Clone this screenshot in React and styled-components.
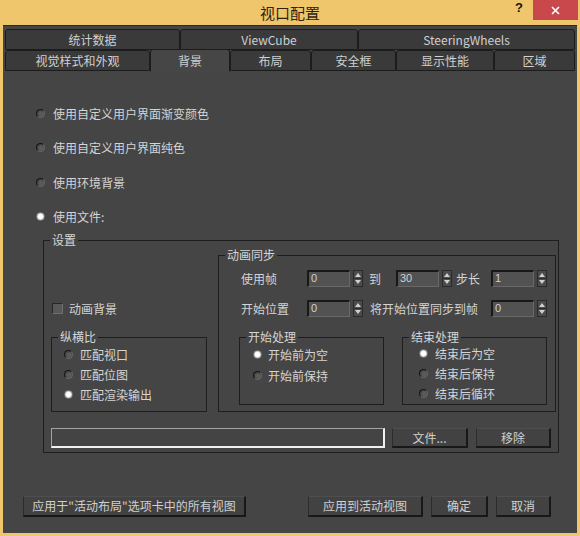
import React from 'react';
import styled, { createGlobalStyle } from 'styled-components';

const GlobalStyle = createGlobalStyle`
  html, body {
    margin: 0;
    padding: 0;
    background: #efc66c;
  }
  body {
    font-family: "Noto Sans CJK SC", "Noto Sans", sans-serif;
  }
`;

const Window = styled.div`
  width: 580px;
  height: 536px;
  box-sizing: border-box;
  display: flex;
  flex-direction: column;
  padding: 0 3px 3px;
  background: #efc66c;
  color: #d4d4d4;
  font-size: 12px;
`;

const TitleBar = styled.div`
  height: 25px;
  margin: 0 -3px;
  display: grid;
  grid-template-columns: 1fr auto 1fr;
  align-items: start;
`;

const Title = styled.div`
  grid-column: 2;
  line-height: 25px;
  font-size: 15px;
  color: #2b2412;
`;

const TitleControls = styled.div`
  grid-column: 3;
  display: flex;
  justify-content: flex-end;
  align-items: flex-start;
`;

const Help = styled.span`
  font-family: "Liberation Sans", sans-serif;
  font-weight: bold;
  font-size: 13px;
  line-height: 16px;
  color: #141414;
  margin-right: 10px;
`;

const Close = styled.div`
  width: 45px;
  height: 20px;
  margin-right: 2px;
  background: #c8484b;
  display: flex;
  align-items: center;
  justify-content: center;
`;

const Body = styled.div`
  flex: 1;
  display: flex;
  flex-direction: column;
  background: #454545;
  border-top: 1px solid #2a2a2a;
`;

const TabStrip = styled.div`
  padding: 3px 2px 0;
`;

const TabRow = styled.div`
  display: grid;
  grid-template-columns: ${p => p.$cols};
  height: 21px;
`;

const Tab = styled.div`
  box-sizing: border-box;
  height: ${p => (p.$active ? '23px' : '21px')};
  margin-top: ${p => (p.$active ? '-1px' : '0')};
  z-index: ${p => (p.$active ? 1 : 0)};
  display: flex;
  align-items: center;
  justify-content: center;
  background: ${p => (p.$active ? '#464646' : '#3a3a3a')};
  border: 1px solid #1c1c1c;
  border-bottom-color: ${p => (p.$active ? '#464646' : '#1c1c1c')};
  border-radius: 3px 3px 0 0;
  color: #d0d0d0;
  font-size: 12px;
  line-height: 12px;
`;

const Panel = styled.div`
  flex: 1;
  display: flex;
  flex-direction: column;
  padding-top: 25px;
`;

const OptionList = styled.div`
  padding-left: 33px;
`;

const RadioRow = styled.div`
  display: flex;
  align-items: center;
  gap: ${p => p.$gap || 8}px;
  height: ${p => p.$h || 20}px;
`;

const RadioDot = styled.span`
  flex: none;
  width: 9px;
  height: 9px;
  border-radius: 50%;
  box-sizing: border-box;
  border: 1px solid;
  border-color: ${p => (p.$on ? '#7a7a7a' : '#151515 #666 #666 #151515')};
  background: ${p =>
    p.$on
      ? 'radial-gradient(circle at 50% 50%, #ffffff 0 40%, #cfcfcf 70%, #9a9a9a 100%)'
      : 'radial-gradient(circle at 60% 60%, #5a5a5a 0 30%, #3c3c3c 80%)'};
`;

const Radio = ({ on, label, gap, h }) => (
  <RadioRow $gap={gap} $h={h}>
    <RadioDot $on={on} />
    <span>{label}</span>
  </RadioRow>
);

const Group = styled.fieldset`
  margin: 0;
  padding: 0;
  min-width: 0;
  box-sizing: border-box;
  border: 1px solid #1e1e1e;
  height: ${p => (p.$height ? `${p.$height}px` : 'auto')};
  width: ${p => (p.$width ? `${p.$width}px` : 'auto')};
`;

const Legend = styled.legend`
  margin-left: 6px;
  padding: 0 2px;
  font-size: 12px;
  line-height: 12px;
  color: #d6d6d6;
`;

const SettingsGroup = styled(Group)`
  margin: 0 18px 0 40px;
`;

const SettingsInner = styled.div`
  padding: 3px 2px 4px 7px;
`;

const SettingsTop = styled.div`
  display: grid;
  grid-template-columns: 156px 338px;
  column-gap: 11px;
`;

const LeftColumn = styled.div`
  display: flex;
  flex-direction: column;
  justify-content: flex-end;
`;

const CheckRow = styled.div`
  display: flex;
  align-items: center;
  gap: 6px;
  height: 12px;
  margin: 0 0 17px 1px;
`;

const CheckBox = styled.span`
  width: 11px;
  height: 11px;
  box-sizing: border-box;
  background: #585858;
  border: 1px solid #262626;
  border-right-color: #6e6e6e;
  border-bottom-color: #6e6e6e;
`;

const GroupBody = styled.div`
  padding: ${p => p.$pad || '1px 0 0 12px'};
`;

const SpinGrid = styled.div`
  display: grid;
  grid-template-columns: 68px 56px 33px 56px 39px 56px;
  grid-auto-rows: 17px;
  row-gap: 13px;
  align-items: center;
`;

const FieldLabel = styled.span`
  padding-left: ${p => p.$indent || 2}px;
  grid-column: ${p => p.$span || 'auto'};
  white-space: nowrap;
`;

const SpinWrap = styled.div`
  display: flex;
  height: 17px;
`;

const SpinField = styled.div`
  width: 43px;
  height: 17px;
  box-sizing: border-box;
  background: #525252;
  border-style: solid;
  border-width: 2px 1px 1px 2px;
  border-color: #181818 #686868 #686868 #181818;
  padding-left: 2px;
  font-family: "Liberation Sans", sans-serif;
  font-size: 11px;
  line-height: 12px;
  color: #d0d0d0;
`;

const SpinArrows = styled.div`
  width: 10px;
  height: 17px;
  margin-left: 3px;
  box-sizing: border-box;
  background: #4c4c4c;
  border: 1px solid #2a2a2a;
  display: flex;
  align-items: center;
  justify-content: center;
`;

const Spinner = ({ value }) => (
  <SpinWrap>
    <SpinField>{value}</SpinField>
    <SpinArrows>
      <svg width="8" height="15" viewBox="0 0 8 15">
        <path d="M4 2 L7 6 H1 Z" fill="#d0d0d0" />
        <line x1="0" y1="7.5" x2="8" y2="7.5" stroke="#2e2e2e" />
        <path d="M4 13 L7 9 H1 Z" fill="#d0d0d0" />
      </svg>
    </SpinArrows>
  </SpinWrap>
);

const SubGroups = styled.div`
  display: flex;
  gap: 18px;
  margin-top: 14px;
`;

const FileRow = styled.div`
  display: flex;
  align-items: center;
  margin-top: 16px;
`;

const PathBox = styled.div`
  width: 334px;
  height: 20px;
  box-sizing: border-box;
  background: #444444;
  border-style: solid;
  border-width: 1px 2px 2px 1px;
  border-color: #a4a4a4 #f0f0f0 #f0f0f0 #a4a4a4;
  margin-right: 7px;
`;

const Button = styled.button`
  width: ${p => p.$w}px;
  height: ${p => p.$h || 20}px;
  margin: 0 ${p => p.$mr || 0}px 0 0;
  padding: 0;
  box-sizing: border-box;
  background: #424242;
  border-style: solid;
  border-width: 1px 2px 2px 1px;
  border-color: #4e4e4e #181818 #181818 #2c2c2c;
  color: #d0d0d0;
  font-family: inherit;
  font-size: 12px;
  line-height: 14px;
`;

const Footer = styled.div`
  display: flex;
  gap: 8px;
  margin-top: 43px;
  padding: 0 26px 0 20px;
`;

const Spacer = styled.div`
  flex: 1;
`;

export default function App() {
  return (
    <>
      <GlobalStyle />
      <Window>
        <TitleBar>
          <Title>视口配置</Title>
          <TitleControls>
            <Help>?</Help>
            <Close>
              <svg width="9" height="9" viewBox="0 0 9 9">
                <path d="M1 1 L8 8 M8 1 L1 8" stroke="#ffffff" strokeWidth="1.6" />
              </svg>
            </Close>
          </TitleControls>
        </TitleBar>
        <Body>
          <TabStrip>
            <TabRow $cols="175px 178px 217px">
              <Tab>统计数据</Tab>
              <Tab>ViewCube</Tab>
              <Tab>SteeringWheels</Tab>
            </TabRow>
            <TabRow $cols="145px 80px 81px 85px 98px 81px">
              <Tab>视觉样式和外观</Tab>
              <Tab $active>背景</Tab>
              <Tab>布局</Tab>
              <Tab>安全框</Tab>
              <Tab>显示性能</Tab>
              <Tab>区域</Tab>
            </TabRow>
          </TabStrip>
          <Panel>
            <OptionList>
              <Radio h={34.5} label="使用自定义用户界面渐变颜色" />
              <Radio h={34.5} label="使用自定义用户界面纯色" />
              <Radio h={34.5} label="使用环境背景" />
              <Radio h={34.5} on label="使用文件:" />
            </OptionList>
            <SettingsGroup>
              <Legend>设置</Legend>
              <SettingsInner>
                <SettingsTop>
                  <LeftColumn>
                    <CheckRow>
                      <CheckBox />
                      <span>动画背景</span>
                    </CheckRow>
                    <Group $height={81}>
                      <Legend>纵横比</Legend>
                      <GroupBody $pad="1px 0 0 12px">
                        <Radio gap={7} label="匹配视口" />
                        <Radio gap={7} label="匹配位图" />
                        <Radio gap={7} on label="匹配渲染输出" />
                      </GroupBody>
                    </Group>
                  </LeftColumn>
                  <Group>
                    <Legend>动画同步</Legend>
                    <GroupBody $pad="9px 0 6px 20px">
                      <SpinGrid>
                        <FieldLabel>使用帧</FieldLabel>
                        <Spinner value="0" />
                        <FieldLabel $indent={6}>到</FieldLabel>
                        <Spinner value="30" />
                        <FieldLabel $indent={4}>步长</FieldLabel>
                        <Spinner value="1" />
                        <FieldLabel>开始位置</FieldLabel>
                        <Spinner value="0" />
                        <FieldLabel $indent={7} $span="span 3">将开始位置同步到帧</FieldLabel>
                        <Spinner value="0" />
                      </SpinGrid>
                      <SubGroups>
                        <Group $width={145} $height={74}>
                          <Legend>开始处理</Legend>
                          <GroupBody $pad="1px 0 0 13px">
                            <Radio gap={6} h={21} on label="开始前为空" />
                            <Radio gap={6} h={21} label="开始前保持" />
                          </GroupBody>
                        </Group>
                        <Group $width={145} $height={74}>
                          <Legend>结束处理</Legend>
                          <GroupBody $pad="0 0 0 16px">
                            <Radio gap={7} on label="结束后为空" />
                            <Radio gap={7} label="结束后保持" />
                            <Radio gap={7} label="结束后循环" />
                          </GroupBody>
                        </Group>
                      </SubGroups>
                    </GroupBody>
                  </Group>
                </SettingsTop>
                <FileRow>
                  <PathBox />
                  <Button $w={76} $mr={8}>文件...</Button>
                  <Button $w={75}>移除</Button>
                </FileRow>
              </SettingsInner>
            </SettingsGroup>
            <Footer>
              <Button $w={223} $h={21}>应用于"活动布局"选项卡中的所有视图</Button>
              <Spacer />
              <Button $w={115} $h={21}>应用到活动视图</Button>
              <Button $w={57} $h={21}>确定</Button>
              <Button $w={55} $h={21}>取消</Button>
            </Footer>
          </Panel>
        </Body>
      </Window>
    </>
  );
}
